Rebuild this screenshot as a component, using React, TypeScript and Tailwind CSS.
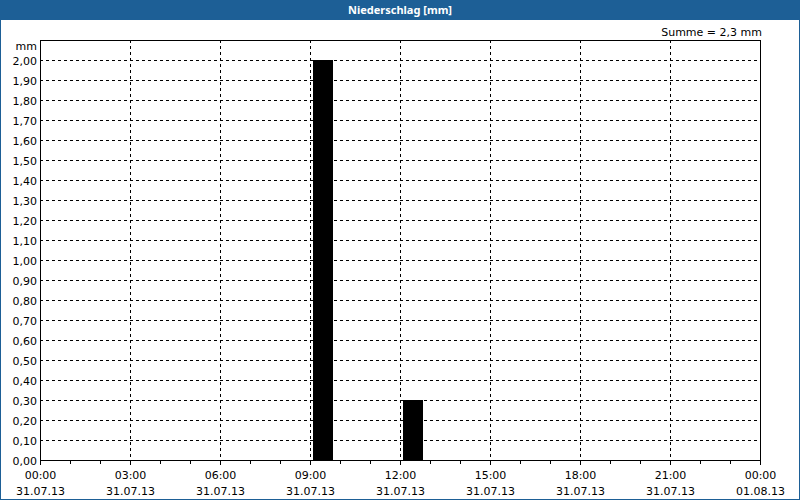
export default function App() {
  const ys = Array.from({ length: 21 }, (_, i) => i);
  const xs = Array.from({ length: 9 }, (_, i) => i);
  const times = ["00:00","03:00","06:00","09:00","12:00","15:00","18:00","21:00","00:00"];
  const dates = ["31.07.13","31.07.13","31.07.13","31.07.13","31.07.13","31.07.13","31.07.13","31.07.13","01.08.13"];
  const font = { fontFamily: "Tahoma, 'DejaVu Sans', Verdana, sans-serif", fontSize: 11 };
  return (
    <div className="w-[800px] h-[500px] bg-[#1d5f96] flex flex-col">
      <div className="h-[20px] flex items-center justify-center text-white font-bold text-[11px] [font-family:'DejaVu_Sans',sans-serif]">
        Niederschlag [mm]
      </div>
      <div className="flex-1 mx-[1px] mb-[1px] bg-white">
        <svg width="798" height="479" viewBox="1 20 798 479" style={font}>
          <text x="762" y="36" textAnchor="end" fill="#000">Summe = 2,3 mm</text>
          <text x="37" y="50" textAnchor="end" fill="#000">mm</text>
          {ys.map((i) => {
            const y = 460 - i * 20 + 0.5;
            return (
              <g key={i}>
                {i > 0 && <line x1={40} x2={760} y1={y} y2={y} stroke="#000" strokeDasharray="3 3" />}
                <text x="37" y={y + 4} textAnchor="end" fill="#000">{(i / 10).toFixed(2).replace(".", ",")}</text>
              </g>
            );
          })}
          {xs.map((i) => {
            const x = 40 + i * 90 + 0.5;
            return (
              <g key={i}>
                {i > 0 && i < 8 && <line x1={x} x2={x} y1={40} y2={460} stroke="#000" strokeDasharray="3 3" />}
                <line x1={x} x2={x} y1={460} y2={465} stroke="#000" />
                <text x={x} y="479" textAnchor="middle" fill="#000">{times[i]}</text>
                <text x={x} y="495" textAnchor="middle" fill="#000">{dates[i]}</text>
              </g>
            );
          })}
          {Array.from({ length: 24 }, (_, i) => i).filter((i) => i % 3 !== 0).map((i) => (
            <line key={i} x1={40 + i * 30 + 0.5} x2={40 + i * 30 + 0.5} y1={460} y2={464} stroke="#000" />
          ))}
          <rect x="313" y="60" width="20" height="400" fill="#000" />
          <rect x="403" y="400" width="20" height="60" fill="#000" />
          <rect x="40.5" y="40.5" width="720" height="420" fill="none" stroke="#000" />
        </svg>
      </div>
    </div>
  );
}
